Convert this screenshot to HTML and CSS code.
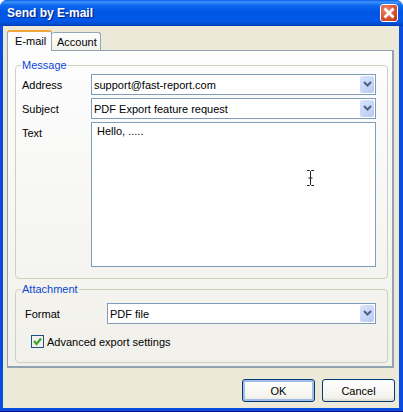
FILE: index.html
```html
<!DOCTYPE html>
<html lang="en">
<head>
  <meta charset="UTF-8" />
  <title>Send by E-mail</title>
  <link rel="stylesheet" href="styles.css">
</head>
<body>
  <div class="window">
    <div class="titleBar">
      <span class="titleText">Send by E-mail</span>
      <button class="closeBtn" aria-label="Close">
        <svg width="18" height="18" viewBox="0 0 18 18">
          <path d="M4.5 4.5 L13.5 13.5 M13.5 4.5 L4.5 13.5" stroke="#fff" stroke-width="2.8" fill="none"/>
        </svg>
      </button>
    </div>

    <div class="client">
      <div class="tabs">
        <div class="tab active">E-mail</div>
        <div class="tab">Account</div>
      </div>

      <div class="panel">
        <fieldset class="group messageGroup">
          <legend>Message</legend>
          <div class="formRow">
            <label>Address</label>
            <div class="combo">
              <span>support@fast-report.com</span>
              <span class="comboBtn"><svg width="9" height="7" viewBox="0 0 9 7"><path d="M1 1 L4.5 4.5 L8 1" stroke="#4d6185" stroke-width="2" fill="none"/></svg></span>
            </div>
          </div>
          <div class="formRow">
            <label>Subject</label>
            <div class="combo">
              <span>PDF Export feature request</span>
              <span class="comboBtn"><svg width="9" height="7" viewBox="0 0 9 7"><path d="M1 1 L4.5 4.5 L8 1" stroke="#4d6185" stroke-width="2" fill="none"/></svg></span>
            </div>
          </div>
          <div class="formRow textRow">
            <label>Text</label>
            <div class="memo">
              Hello, .....
              <svg class="ibeam" width="7" height="16" viewBox="0 0 7 16">
                <path d="M0 .5 H2.5 L3.5 1.5 L4.5 .5 H7 M3.5 1.5 V14.5 M0 15.5 H2.5 L3.5 14.5 L4.5 15.5 H7 M1.5 8 H5.5" stroke="#222" fill="none"/>
              </svg>
            </div>
          </div>
        </fieldset>

        <fieldset class="group attachGroup">
          <legend>Attachment</legend>
          <div class="formRow formatRow">
            <label>Format</label>
            <div class="combo">
              <span>PDF file</span>
              <span class="comboBtn"><svg width="9" height="7" viewBox="0 0 9 7"><path d="M1 1 L4.5 4.5 L8 1" stroke="#4d6185" stroke-width="2" fill="none"/></svg></span>
            </div>
          </div>
          <div class="checkRow">
            <span class="checkBox">
              <svg width="11" height="11" viewBox="0 0 11 11"><path d="M2 5 L4.5 8 L9 2.5" stroke="#3fa52f" stroke-width="2.2" fill="none"/></svg>
            </span>
            <span>Advanced export settings</span>
          </div>
        </fieldset>
      </div>

      <div class="footer">
        <button class="btn default">OK</button>
        <button class="btn">Cancel</button>
      </div>
    </div>
  </div>
</body>
</html>
```

FILE: styles.css
```css
* {
  box-sizing: border-box;
}
html, body {
  margin: 0;
  height: 100%;
  background: #fff;
}
body {
  font-family: 'Liberation Sans', Arial, sans-serif;
  font-size: 11px;
  color: #000;
  overflow: hidden;
}
.window {
  width: 403px;
  height: 412px;
  display: flex;
  flex-direction: column;
  padding: 0 4px 3px 3px;
  background: #0a4be0;
  border-radius: 7px 7px 0 0;
  border-bottom: 1px solid #00138c;
}
.titleBar {
  height: 26px;
  flex-shrink: 0;
  margin: 0 -4px 0 -3px;
  padding: 0 5px 0 7px;
  display: flex;
  align-items: center;
  justify-content: space-between;
  border-radius: 7px 7px 0 0;
  background: linear-gradient(#0a5be8 0, #3f96fb 2px, #0f6bf0 5px, #0055e5 12px, #0358e8 21px, #0047c8 25px, #0038a8 26px);
}
.titleText {
  color: #fff;
  font-weight: bold;
  font-size: 12px;
  text-shadow: 1px 1px 1px #0a1e80;
}
.closeBtn {
  width: 18px;
  height: 18px;
  padding: 0;
  display: block;
  border: 1px solid #fff;
  border-radius: 3px;
  background: radial-gradient(circle at 35% 30%, #ea8a6c, #d5492a 65%, #b8340f);
}
.closeBtn svg {
  display: block;
  margin: -1px;
}
.client {
  flex: 1;
  min-height: 0;
  display: flex;
  flex-direction: column;
  padding: 4px 5px 0 4px;
  background: #ece9d8;
}
.tabs {
  display: flex;
  align-items: flex-end;
  height: 20px;
  flex-shrink: 0;
  position: relative;
  z-index: 1;
}
.tab {
  height: 18px;
  padding: 1px 3px 0 5px;
  border: 1px solid #91a7b4;
  border-bottom: none;
  border-left: none;
  border-radius: 3px 3px 0 0;
  background: linear-gradient(#fff, #f3f1ea);
  line-height: 17px;
}
.tab.active {
  height: 21px;
  width: 45px;
  margin-bottom: -1px;
  padding: 2px 0 0 7px;
  border-left: 1px solid #91a7b4;
  border-top: 2px solid #f0a63a;
  background: #fcfcfe;
  line-height: 15px;
}
.panel {
  height: 318px;
  flex-shrink: 0;
  padding: 8px 4px 0 7px;
  border: 1px solid #8fa3b0;
  border-right-width: 2px;
  border-bottom-width: 2px;
  background: linear-gradient(#fdfdfe, #f1f0ea);
}
.group {
  margin: 0;
  padding: 0;
  border: 1px solid #d0d0bf;
  border-radius: 4px;
}
.group legend {
  margin-left: -1px;
  padding: 0 1px;
  color: #0a46d2;
  line-height: 13px;
}
.messageGroup {
  height: 220px;
  padding: 2px 11px 0 6px;
}
.attachGroup {
  height: 80px;
  margin-top: 4px;
  padding: 7px 11px 0 9px;
}
.attachGroup legend {
  margin-left: -4px;
}
.formRow {
  display: flex;
  align-items: center;
  margin-bottom: 3px;
}
.formRow label {
  width: 69px;
  flex-shrink: 0;
}
.formatRow label {
  width: 82px;
}
.textRow {
  align-items: flex-start;
}
.textRow label {
  padding-top: 5px;
}
.combo {
  flex: 1;
  height: 21px;
  display: flex;
  align-items: center;
  justify-content: space-between;
  padding: 1px 1px 1px 2px;
  border: 1px solid #7f9db9;
  background: #fff;
}
.comboBtn {
  width: 14px;
  height: 17px;
  display: flex;
  align-items: center;
  justify-content: center;
  border-radius: 2px;
  background: linear-gradient(135deg, #dbe5fc, #b8c9f3);
}
.memo {
  flex: 1;
  height: 145px;
  padding: 2px 5px;
  position: relative;
  border: 1px solid #7f9db9;
  background: #fff;
}
.ibeam {
  position: absolute;
  left: 215px;
  top: 47px;
}
.checkRow {
  display: flex;
  align-items: center;
  gap: 3px;
  margin: 11px 0 0 6px;
}
.checkBox {
  width: 13px;
  height: 13px;
  display: block;
  border: 1px solid #1c5180;
  background: #f2f2ea;
}
.checkBox svg {
  display: block;
}
.footer {
  display: flex;
  justify-content: flex-end;
  gap: 7px;
  margin-top: 11px;
  margin-right: -1px;
}
.btn {
  width: 73px;
  height: 23px;
  padding: 0;
  border: 1px solid #003c74;
  border-radius: 3px;
  background: linear-gradient(#fff, #f3f2ec 85%, #dcd8ca);
  font-family: inherit;
  font-size: 11px;
  color: #000;
}
.btn.default {
  box-shadow: inset 0 0 0 2px #a6bce8;
}
```
